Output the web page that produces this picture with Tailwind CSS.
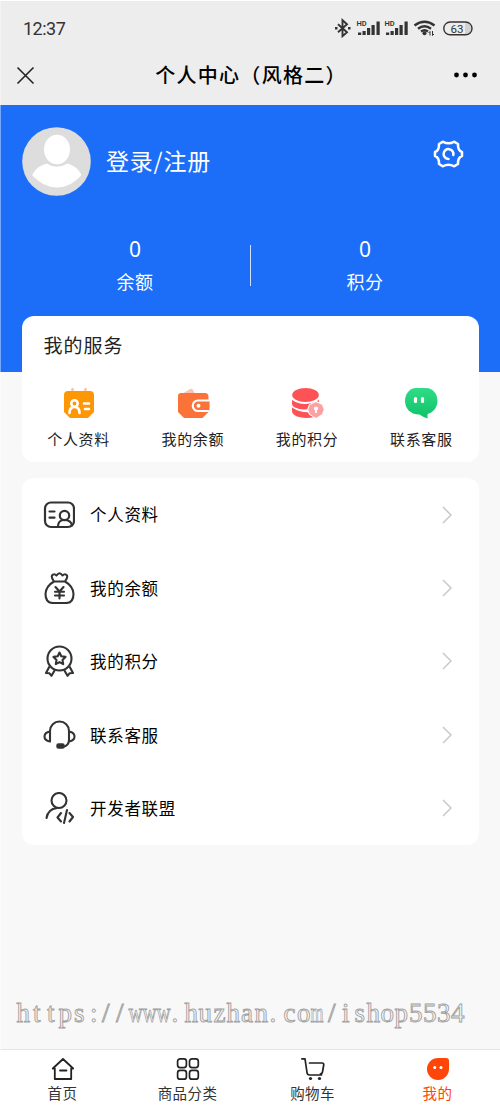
<!DOCTYPE html>
<html lang="zh-CN">
<head>
<meta charset="utf-8">
<title>个人中心（风格二）</title>
<script src="https://cdn.jsdelivr.net/npm/@tailwindcss/browser@4"></script>
</head>
<body class="bg-[#f8f8f8]">
<div class="relative flex h-[1111px] w-[500px] flex-col overflow-hidden bg-[#f8f8f8] font-['Noto_Sans_CJK_SC',sans-serif] text-[#222]">
  <header class="h-[105px] shrink-0 border-t border-white bg-[#ededed]">
    <div class="flex h-[54px] items-center justify-between pl-[23px] pr-[27px]">
      <span class="font-['Roboto',sans-serif] text-[18px] tracking-[-0.5px] text-[#333]">12:37</span>
      <svg class="h-6 w-[140px]" viewBox="0 0 140 24" fill="none" stroke="#333">
        <path d="M5 8.200l9 8-4.500 4V4.200l4.500 4-9 8" stroke-width="1.900"/>
        <path d="M2 12.200h2.500M15 12.200h2.500" stroke-width="2.400"/>
        <g fill="#333" stroke="none" font-family="Roboto" font-weight="600" font-size="7.500">
          <text x="23.500" y="9.500">HD</text><text x="51.500" y="9.500">HD</text>
          <path d="M25 16.500h3.200v2.500h-3.200zM29.500 15h3.200v4h-3.200zM34 12h3.200v7h-3.200zM38.500 9h3.200v10h-3.200zM43.500 5.500h3.200v13.500h-3.200z"/>
          <path d="M53 16.500h3.200v2.500h-3.200zM57.500 15h3.200v4h-3.200zM62 12h3.200v7h-3.200zM66.500 9h3.200v10h-3.200zM71.500 5.500h3.200v13.500h-3.200z"/>
          <circle cx="91.500" cy="17.200" r="2"/>
        </g>
        <path d="M81.500 9.500q10-7.500 20 0M85 12.700q6.500-5 13 0M88 15.500q3.500-2.500 7 0" stroke-width="2.400"/>
        <path d="M97 19.500v-4l-1.500 1.500M99.500 15v4.500l1.500-1.500" stroke-width="1"/>
        <path d="M132 6.500h1a5.800 5.800 0 0 1 0 11.500h-1z" fill="#d2d2d2" stroke="none"/>
        <rect x="110.800" y="6" width="28.200" height="12.800" rx="6.400" stroke-width="1.400"/>
        <text x="117.500" y="16.500" font-family="Roboto" font-size="11.500" fill="#333" stroke="none">63</text>
      </svg>
    </div>
    <div class="flex h-10 items-center justify-between pl-4 pr-[23px]">
      <svg class="size-[19px]" viewBox="0 0 19 19"><path d="M1.500 1.500l16 16M17.500 1.500l-16 16" stroke="#222" stroke-width="1.600"/></svg>
      <h1 class="-mt-px ml-[13px] text-[20px] font-medium tracking-[1.300px] text-black">个人中心（风格二）</h1>
      <svg class="-mt-px h-5 w-[23px]" viewBox="0 0 23 20"><circle cx="2.500" cy="10" r="2.400"/><circle cx="11.500" cy="10" r="2.400"/><circle cx="20.500" cy="10" r="2.400"/></svg>
    </div>
  </header>

  <section class="h-[267px] shrink-0 bg-[#1c6ef8] px-[22px] pt-[22px] text-white">
    <div class="flex h-[69px] items-center">
      <svg class="size-[69px]" viewBox="0 0 69 69"><circle cx="34.500" cy="34.500" r="34.300" fill="#ddd"/><ellipse cx="35" cy="22.500" rx="13" ry="14.700" fill="#fff"/><path d="M10 48q5-9 14.500-11.500 10.500 6.500 21 0Q55 39 59.500 48 49 60.500 35 60.500T10 48z" fill="#fff"/></svg>
      <span class="-mt-[3px] ml-[15px] flex-1 text-[23px] tracking-[0.8px]">登录/注册</span>
      <svg class="mb-[15px] mr-[14px] h-[28px] w-[31px]" viewBox="0 0 31 28" fill="none" stroke="#fff" stroke-width="2.500" stroke-linejoin="round" stroke-linecap="round"><path d="M10 1.700Q15.500 5 21 1.700L25 4Q24.700 10.500 29 12v4Q24.700 17.500 25 24L21 26.300Q15.500 23 10 26.300L6 24Q6.300 17.500 2 16v-4Q6.300 10.500 6 4z"/><path d="M15.500 18.900a4.900 4.900 0 1 1 4.800-4"/></svg>
    </div>
    <div class="mt-[42px] flex items-center justify-between">
      <div class="flex w-[226px] flex-col items-center"><span class="h-[32px] font-['Noto_Sans',sans-serif] text-[21px] leading-[23px]">0</span><span class="h-[23px] text-[18px] leading-[22px] tracking-[0.5px]">余额</span></div>
      <div class="h-[41px] w-px bg-white/80"></div>
      <div class="flex w-[226px] flex-col items-center"><span class="h-[32px] font-['Noto_Sans',sans-serif] text-[21px] leading-[23px]">0</span><span class="h-[23px] text-[18px] leading-[22px] tracking-[0.5px]">积分</span></div>
    </div>
  </section>

  <section class="relative mx-auto -mt-[56px] h-[146px] w-[457px] shrink-0 rounded-xl bg-white pt-[16px]">
    <h2 class="pl-[22px] text-[19px] leading-[26px] tracking-[1px]">我的服务</h2>
    <div class="mt-[29px] grid grid-cols-4 text-[15px] leading-[22px] tracking-[0.7px]">
      <div class="flex flex-col items-center gap-[9px]">
        <svg class="h-[32px] w-[32px]" viewBox="0 0 32 32"><path d="M9.500 2v5M22.500 2v5" stroke="#fbc39c" stroke-width="2.500" stroke-linecap="round"/><path d="M5 4h22q4 0 4 4v17l-6 6H7l-6-6V8q0-4 4-4z" fill="#fe9705"/><g fill="none" stroke="#fff" stroke-width="2.600" stroke-linecap="round"><circle cx="11.500" cy="16.500" r="3.200"/><path d="M6.500 26q0-6 5-6t5 6M21 16.500h5M22 22h4"/></g></svg>
        <span>个人资料</span>
      </div>
      <div class="flex flex-col items-center gap-[9px]">
        <svg class="h-[32px] w-[34px]" viewBox="0 0 34 32"><path d="M6 7l8-5q2-1 3 1l2 4z" fill="#fbc5b0"/><path d="M5 6h24q3.500 0 3.500 4v15l-6 6H8l-6-6V9q0-3 3-3z" fill="#fb7338"/><path d="M33.500 13.500H22a5 5 0 0 0 0 10.500h11.500" fill="#fb7338" stroke="#fff" stroke-width="2.200"/><circle cx="22.500" cy="18.700" r="2" fill="#fff"/></svg>
        <span>我的余额</span>
      </div>
      <div class="flex flex-col items-center gap-[9px]">
        <svg class="h-[32px] w-[33px]" viewBox="0 0 33 32" fill="#fd5356"><ellipse cx="14.500" cy="8" rx="13.300" ry="7"/><path d="M1 13q12 8 27 0v4q-13 9-24 3.500-3-1.500-3-3.500zM1 20.500q10 6.500 22 4v5.500Q14 32 6 29.500q-5-2.500-5-5.500z"/><path d="M25 13.500l7 4 2 5-2 5-7 4.500-7-4.500-2-5 2-5z" fill="#fff"/><path d="M25 16l5.500 2.500 1.500 4-1.500 4-5.500 3.500-5.500-3.500-1.500-4 1.500-4z" fill="#fca0a1" stroke="#fca0a1" stroke-width="1.500" stroke-linejoin="round"/><circle cx="25" cy="21.500" r="2.100" fill="#fff"/><path d="M25 22v4" stroke="#fff" stroke-width="2"/></svg>
        <span>我的积分</span>
      </div>
      <div class="flex flex-col items-center gap-[9px]">
        <svg class="h-[32px] w-[34px]" viewBox="0 0 34 32"><defs><linearGradient id="g" x1="0" y1="0" x2="0" y2="1"><stop stop-color="#2fdc87"/><stop offset="1" stop-color="#10c268"/></linearGradient></defs><path d="M12 1h10C29 1 33.500 7 33.500 14c0 6-4 11.500-10 13v4.500Q19 30 15.500 27.500C6 27.500 1 21 1 14S5.500 1 12 1z" fill="url(#g)"/><path d="M11.500 11.500v3M18.500 11.500v3" stroke="#fff" stroke-width="3.200" stroke-linecap="round"/></svg>
        <span>联系客服</span>
      </div>
    </div>
  </section>

  <section class="mx-auto mt-[16px] grid h-[367px] w-[457px] shrink-0 grid-rows-5 rounded-xl bg-white pl-[21px] pr-[27px] text-[16.500px] tracking-[0.7px] text-black">
    <div class="flex items-center">
      <svg class="size-8" viewBox="0 0 32 32" fill="none" stroke="#333" stroke-width="2.200" stroke-linecap="round"><rect x="2" y="3.500" width="29" height="24.500" rx="6"/><path d="M6.500 12.500h5M6.500 18.700h5"/><circle cx="21.500" cy="16.500" r="4.700"/><path d="M15 27.500q0-6.500 6.500-6.500t7.500 5.500"/></svg>
      <span class="ml-[15.500px] flex-1">个人资料</span>
      <svg class="h-[18px] w-[10px]" viewBox="0 0 10 18" fill="none" stroke="#c8c8c8" stroke-width="1.500"><path d="M1 1l8 8-8 8"/></svg>
    </div>
    <div class="flex items-center">
      <svg class="size-8" viewBox="0 0 32 32" fill="none" stroke="#333" stroke-width="2.100" stroke-linecap="round" stroke-linejoin="round"><path d="M11 9.500Q8 5 9 3.500q2-2.500 4.500 0 3-4.500 6 0 2.500-2.500 4.500 0 1 1.500-2 6zM11 9.500Q3 14 2.500 22q0 9 7.500 9h13q7.500 0 7.500-9Q30 14 22 9.500M12.500 15l4 4.500 4-4.500M16.500 19.500v7M12 19.800h9M12 23.500h9"/></svg>
      <span class="ml-[15.500px] flex-1">我的余额</span>
      <svg class="h-[18px] w-[10px]" viewBox="0 0 10 18" fill="none" stroke="#c8c8c8" stroke-width="1.500"><path d="M1 1l8 8-8 8"/></svg>
    </div>
    <div class="flex items-center">
      <svg class="size-8" viewBox="0 0 32 32" fill="none" stroke="#333" stroke-width="2.100" stroke-linejoin="round"><circle cx="16.500" cy="13.500" r="12"/><path d="M16.500 7.500l1.800 3.800 4.200.6-3 3 .7 4.200-3.700-2-3.700 2 .7-4.200-3-3 4.200-.6zM6.500 21.500L3 28l3.500.3 2 2.500 3.500-6M26.500 21.500L30 28l-3.500.3-2 2.500-3.500-6"/></svg>
      <span class="ml-[15.500px] flex-1">我的积分</span>
      <svg class="h-[18px] w-[10px]" viewBox="0 0 10 18" fill="none" stroke="#c8c8c8" stroke-width="1.500"><path d="M1 1l8 8-8 8"/></svg>
    </div>
    <div class="flex items-center">
      <svg class="size-8 overflow-visible" viewBox="0 0 32 32" fill="none" stroke="#333" stroke-width="2.100" stroke-linecap="round"><path d="M7 22.500V12a9.500 9.500 0 0 1 19 0v9q0 6-6.500 7M7 12.500q-5.500 1-5.500 5t5.500 5M26 12.500q5.500 1 5.500 5t-5.500 5"/><rect x="14.500" y="25.500" width="6" height="3" rx="1" fill="#333" stroke-width="2.500"/></svg>
      <span class="ml-[15.500px] flex-1">联系客服</span>
      <svg class="h-[18px] w-[10px]" viewBox="0 0 10 18" fill="none" stroke="#c8c8c8" stroke-width="1.500"><path d="M1 1l8 8-8 8"/></svg>
    </div>
    <div class="flex items-center">
      <svg class="size-8" viewBox="0 0 32 32" fill="none" stroke="#333" stroke-width="2.100" stroke-linecap="round" stroke-linejoin="round"><circle cx="16" cy="8.500" r="7.500"/><path d="M3.500 26Q5 17 14 16M18 21l-3.500 4.500 3.500 4M26.500 21l3.500 4-3.500 4.500M24 18l-3 13"/></svg>
      <span class="ml-[15.500px] flex-1">开发者联盟</span>
      <svg class="h-[18px] w-[10px]" viewBox="0 0 10 18" fill="none" stroke="#c8c8c8" stroke-width="1.500"><path d="M1 1l8 8-8 8"/></svg>
    </div>
  </section>

  <div class="mt-auto shrink-0 pb-[16px] pl-[16px]">
    <svg class="h-[34px] w-[460px]" viewBox="0 0 460 34" font-family="Liberation Serif" font-size="27" fill="#f8f8f8" stroke="#a0a0a0" stroke-width=".9">
      <text y="23" x="0.500 17 31 42.500 58 74 86 100">https://</text>
      <text y="23" transform="translate(112.500 0) scale(.72 1)" x="0 19.400 38.900">www</text>
      <text y="23" x="155.500 168.500 182.500 197.500 210.500 225 238.500 253.500 267.500 281">.huzhan.co</text>
      <text y="23" transform="translate(294.500 0) scale(.62 1)" x="0">m</text>
      <text y="23" x="312 326 338.500 350.500 364.500 378.500 393 407 421 435">/ishop5534</text>
    </svg>
  </div>

  <nav class="grid h-[62px] shrink-0 grid-cols-4 border-t border-[#e6e6e6] bg-white pt-[7px] text-[14.500px] leading-[20px] tracking-[0.4px] text-[#333]">
    <div class="flex flex-col items-center gap-[2px]">
      <svg class="size-6" viewBox="0 0 24 24" fill="none" stroke="#222" stroke-width="1.800" stroke-linejoin="round" stroke-linecap="round"><path d="M1.800 11.500L12 2l10.200 9.500h-2V22H3.800V11.500zM9 13.500h6.500"/></svg><span>首页</span>
    </div>
    <div class="flex flex-col items-center gap-[2px]">
      <svg class="size-6" viewBox="0 0 24 24" fill="none" stroke="#222" stroke-width="1.700"><rect x="1.600" y="1.800" width="8.800" height="8.800" rx="2.500"/><rect x="13.500" y="1.800" width="8.800" height="8.800" rx="2.500"/><rect x="1.600" y="13.400" width="8.800" height="8.800" rx="2.500"/><rect x="13.500" y="13.400" width="8.800" height="8.800" rx="2.500"/></svg><span>商品分类</span>
    </div>
    <div class="flex flex-col items-center gap-[2px]">
      <svg class="size-6" viewBox="0 0 24 24" fill="none" stroke="#222" stroke-width="1.700" stroke-linecap="round" stroke-linejoin="round"><path d="M.8 1.800H4L6 15.500q.3 2.500 2.500 2.500h12M8.500 6H21q2 0 1.700 2L21.500 15q-.3 1.800-2 1.800"/><circle cx="9.500" cy="21.500" r="1.600" fill="#222" stroke="none"/><circle cx="18.500" cy="21.500" r="1.600" fill="#222" stroke="none"/></svg><span>购物车</span>
    </div>
    <div class="flex flex-col items-center gap-[2px] text-[#fe4609]">
      <svg class="size-6" viewBox="0 0 24 24"><path d="M12 1h8q3 0 3 3v8a11 11 0 1 1-11-11z" fill="#fe4609"/><circle cx="8.700" cy="10.500" r="1.500" fill="#fff"/><circle cx="15" cy="10.500" r="1.500" fill="#fff"/></svg><span>我的</span>
    </div>
  </nav>
  <div class="absolute inset-y-0 left-0 w-px bg-white/40"></div>
</div>
</body>
</html>
